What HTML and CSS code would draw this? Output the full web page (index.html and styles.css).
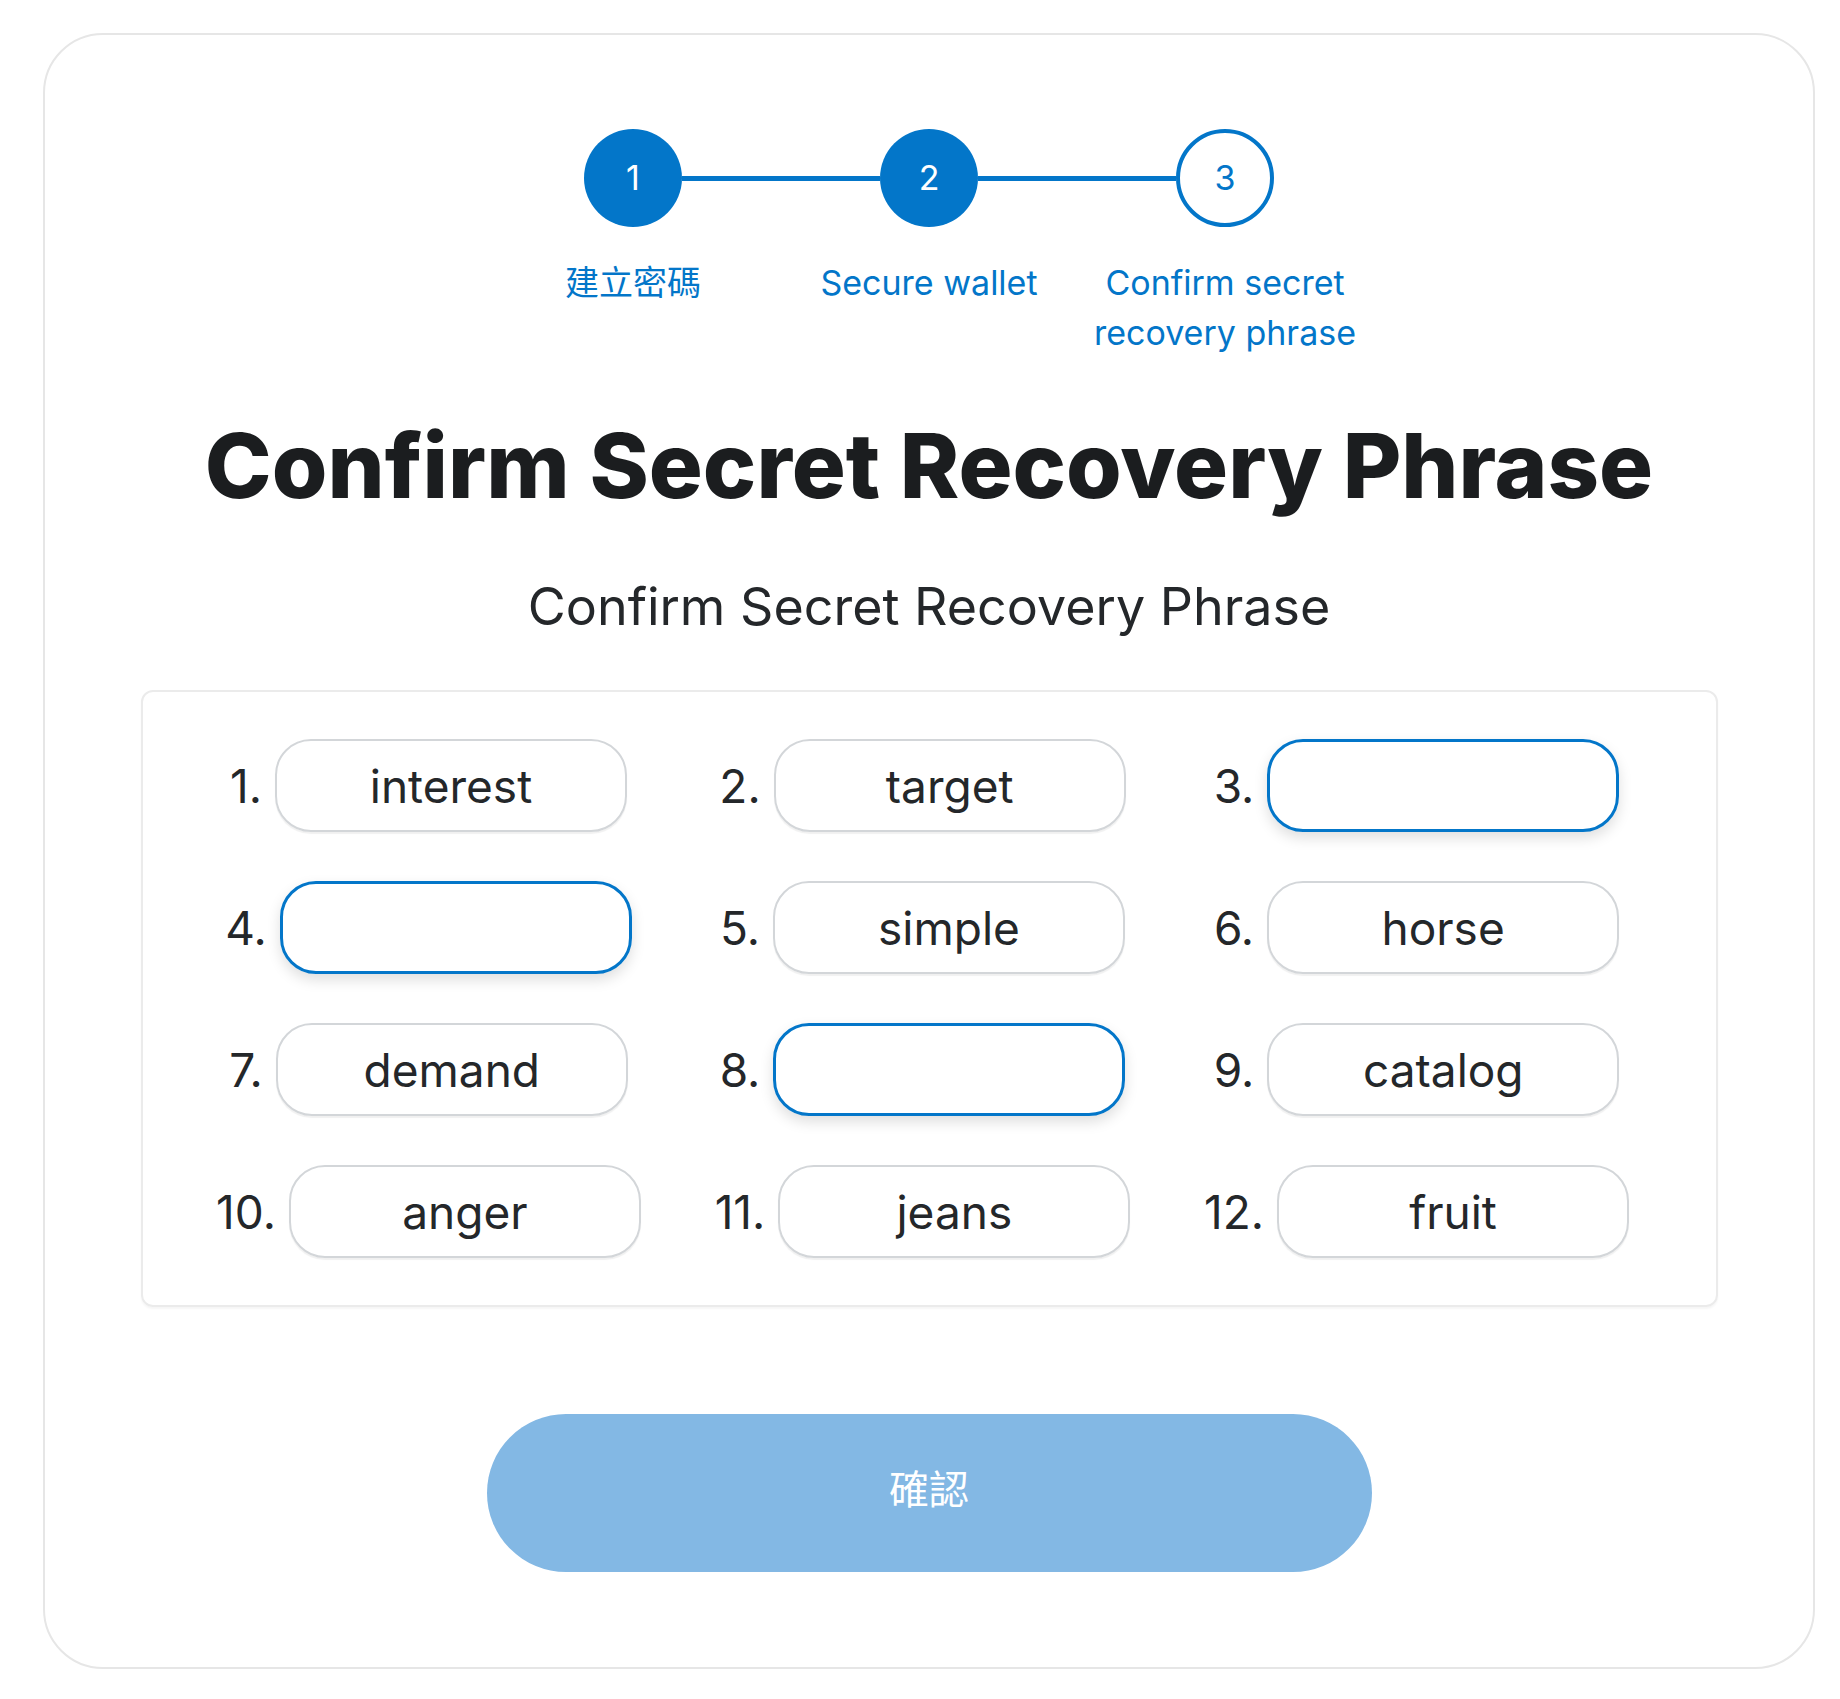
FILE: index.html
```html
<!DOCTYPE html>
<html lang="zh-Hant">
<head>
<meta charset="utf-8">
<title>Confirm Secret Recovery Phrase</title>
<link rel="stylesheet" href="styles.css">
</head>
<body>
<div class="card">
  <div class="stepper">
    <div class="track">
      <div class="dot dot-done">1</div>
      <div class="bar"></div>
      <div class="dot dot-done">2</div>
      <div class="bar"></div>
      <div class="dot dot-current">3</div>
    </div>
    <div class="step-labels">
      <div class="step-label">建立密碼</div>
      <div class="step-label">Secure wallet</div>
      <div class="step-label">Confirm secret recovery phrase</div>
    </div>
  </div>

  <h1 class="title">Confirm Secret Recovery Phrase</h1>
  <p class="subtitle">Confirm Secret Recovery Phrase</p>

  <div class="chips">
    <div class="chip-item"><span class="num">1.</span><div class="chip">interest</div></div>
    <div class="chip-item"><span class="num">2.</span><div class="chip">target</div></div>
    <div class="chip-item"><span class="num">3.</span><div class="chip chip-input"></div></div>
    <div class="chip-item"><span class="num">4.</span><div class="chip chip-input"></div></div>
    <div class="chip-item"><span class="num">5.</span><div class="chip">simple</div></div>
    <div class="chip-item"><span class="num">6.</span><div class="chip">horse</div></div>
    <div class="chip-item"><span class="num">7.</span><div class="chip">demand</div></div>
    <div class="chip-item"><span class="num">8.</span><div class="chip chip-input"></div></div>
    <div class="chip-item"><span class="num">9.</span><div class="chip">catalog</div></div>
    <div class="chip-item"><span class="num">10.</span><div class="chip">anger</div></div>
    <div class="chip-item"><span class="num">11.</span><div class="chip">jeans</div></div>
    <div class="chip-item"><span class="num">12.</span><div class="chip">fruit</div></div>
  </div>

  <button class="confirm" disabled>確認</button>
</div>
</body>
</html>
```

FILE: styles.css
```css
html, body {
  margin: 0;
  padding: 0;
  background: #ffffff;
}

body {
  font-family: "Inter", "Noto Sans CJK TC", sans-serif;
  color: #24272a;
}

.card {
  box-sizing: border-box;
  width: 1772px;
  height: 1636px;
  margin: 33px 0 0 43px;
  border: 2px solid #e6e6e6;
  border-radius: 60px;
  display: flex;
  flex-direction: column;
  align-items: center;
  padding-top: 94px;
}

/* stepper */
.stepper {
  display: flex;
  flex-direction: column;
  align-items: center;
}

.track {
  display: flex;
  align-items: center;
}

.dot {
  box-sizing: border-box;
  width: 98px;
  height: 98px;
  border-radius: 50%;
  display: flex;
  align-items: center;
  justify-content: center;
  font-size: 34px;
  line-height: 1;
}

.dot-done {
  background: #0376c9;
  color: #ffffff;
}

.dot-current {
  background: #ffffff;
  border: 4px solid #0376c9;
  color: #0376c9;
}

.bar {
  width: 198px;
  height: 5px;
  background: #0376c9;
}

.step-labels {
  display: flex;
  margin-top: 31px;
}

.step-label {
  width: 296px;
  text-align: center;
  font-size: 34px;
  line-height: 50px;
  color: #0376c9;
  font-family: "Inter", "Noto Sans CJK TC", sans-serif;
}

/* headings */
.title {
  margin: 53px 0 0;
  font-size: 90px;
  line-height: 110px;
  font-weight: 800;
  color: #1b1d1f;
  text-align: center;
}

.subtitle {
  margin: 56px 0 0;
  font-size: 52px;
  line-height: 60px;
  font-weight: 400;
  color: #24272a;
  text-align: center;
}

/* chips */
.chips {
  box-sizing: border-box;
  width: 1577px;
  margin-top: 53px;
  padding: 47px 51px 47px 39px;
  border: 2px solid #ebebeb;
  border-radius: 12px;
  display: grid;
  grid-template-columns: repeat(3, 494px);
  row-gap: 49px;
  box-shadow: 0 2px 2px rgba(0, 0, 0, 0.04);
}

.chip-item {
  display: flex;
  align-items: center;
  justify-content: center;
  gap: 13px;
}

.num {
  font-size: 46px;
  line-height: 1;
  color: #24272a;
}

.chip {
  box-sizing: border-box;
  width: 352px;
  height: 93px;
  border: 2px solid #d3d6d9;
  border-radius: 36px;
  display: flex;
  align-items: center;
  justify-content: center;
  font-size: 46px;
  color: #24272a;
  box-shadow: 0 2px 1px rgba(0, 0, 0, 0.06);
}

.chip-input {
  border: 3px solid #0376c9;
  box-shadow: 0 6px 14px rgba(0, 0, 0, 0.13);
}

/* button */
.confirm {
  margin-top: 107px;
  width: 885px;
  height: 158px;
  border: none;
  border-radius: 79px;
  background: #83b8e4;
  color: #ffffff;
  font-family: "Noto Sans CJK TC", sans-serif;
  font-size: 40px;
  padding: 0 0 12px;
}
```
